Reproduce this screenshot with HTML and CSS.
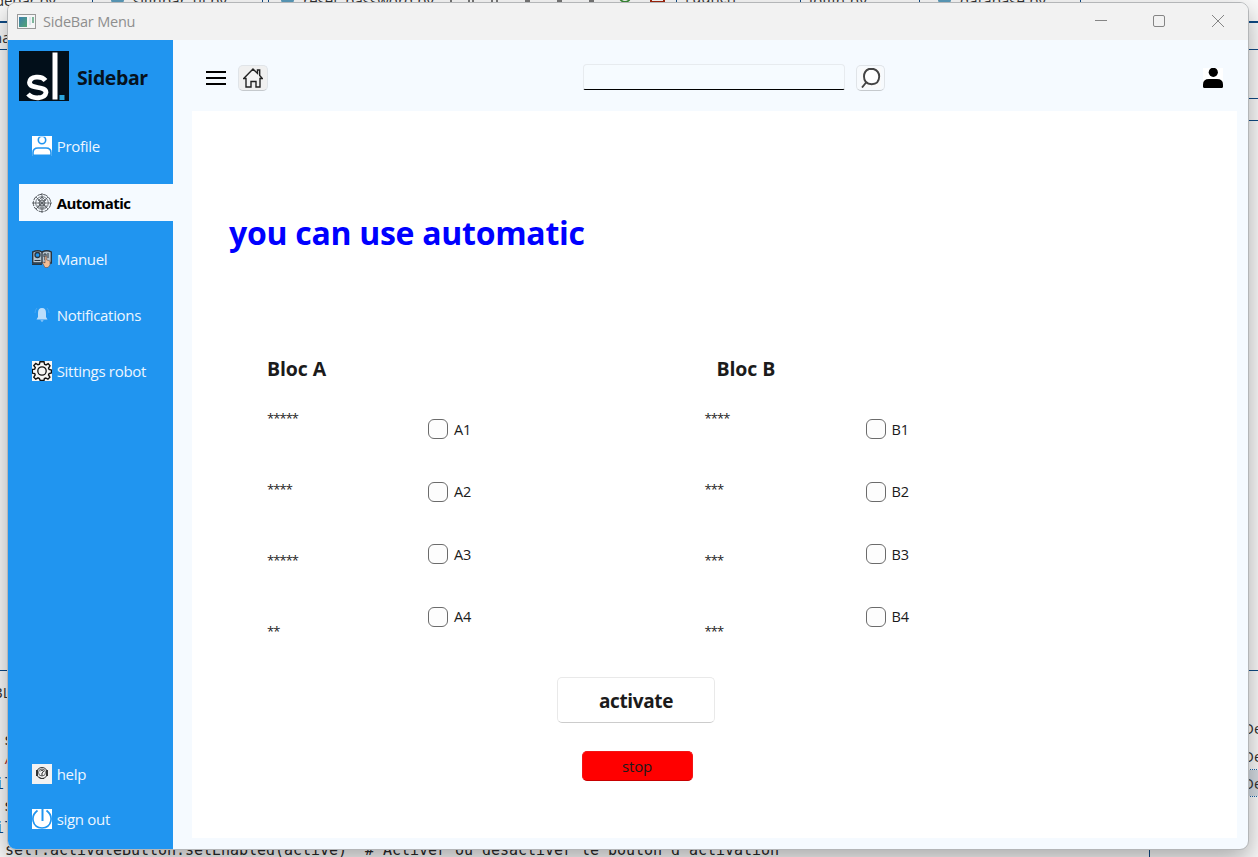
FILE: index.html
```html
<!DOCTYPE html>
<html lang="en">
<head>
<meta charset="utf-8">
<title>SideBar Menu</title>
<link rel="stylesheet" href="styles.css">
</head>
<body>
<div class="desktop">
  <!-- editor behind the window -->
  <svg class="editor" width="1258" height="857" viewBox="0 0 1258 857">
    <g stroke="#0f4a85" stroke-width="1" shape-rendering="crispEdges">
      <path d="M92.5 0V3M262.5 0V3M268.500 0V3M676.5 0V3M800.5 0V3M919.5 0V3M1080.5 0V3"/>
      <path d="M0 49.500H8M0 670.500H8M1248 49.500H1258M1248 98.500H1258M1248 120.500H1258M1248 670.500H1258M1149.500 849V857"/>
      <path d="M0 22H8M1248 22H1258" stroke-width="2"/>
    </g>
    <g fill="#5c9dbd"><rect x="111" y="-6" width="13" height="9" rx="3"/><rect x="281" y="-6" width="13" height="9" rx="3"/><rect x="938" y="-6" width="13" height="9" rx="3"/></g>
    <g class="tabs">
      <text x="-5" y="6" textLength="61">debar.py</text>
      <text x="133" y="6" textLength="94">signbar_ui.py</text>
      <text x="303" y="6" textLength="131">reset_password.py</text>
      <text x="685" y="3" textLength="51">Launch</text>
      <text x="809" y="6" textLength="58">login.py</text>
      <text x="960" y="6" textLength="86">database.py</text>
      <text x="-7" y="43">na</text>
      <text x="-7" y="698">BL</text>
      <text x="1243" y="734">De</text><text x="1243" y="762">De</text>
    </g>
    <g fill="none" stroke="#777" stroke-width="2"><path d="M451 0v2M469 0v2M473 0v2M492 0v2M497 0v2M525 1h5M557 1h5M589 1h5"/><circle cx="625" cy="-3" r="5" stroke="#388a34"/><path d="M651 -5v7h13v-7" stroke="#a1260d"/></g>
    <rect x="1240" y="770" width="18" height="26" fill="#d4dbe2"/>
    <path d="M1240 769.500H1258M1240 796.500H1258" stroke="#1b68ad" stroke-dasharray="1 1"/>
    <text class="side" x="1243" y="789">De</text>
    <g class="code">
      <text x="4" y="745">s</text><text x="4" y="763" fill="#a33">/</text><text x="-5" y="789" fill="#0f4a85">il</text><text x="4" y="811">s</text><text x="-5" y="833" fill="#0f4a85">il</text>
      <text x="5" y="855" textLength="774">self.activateButton.setEnabled(active)&#160; # Activer ou désactiver le bouton d'activation</text>
    </g>
  </svg>

  <div class="window">
    <header class="titlebar">
      <svg width="19" height="16" viewBox="0 0 19 16"><defs><linearGradient id="g" x2="1" y2="1"><stop stop-color="#3b7fae"/><stop offset="1" stop-color="#55a573"/></linearGradient></defs><rect x=".5" y=".5" width="18" height="14" fill="#f5f6f7" stroke="#999"/><rect x="2" y="3" width="8" height="10" fill="url(#g)"/><path d="M12 3h2v8h-2z" fill="#dce7ec"/><path d="M15 3h2v6h-2z" fill="#7fb79c"/></svg>
      <span class="caption">SideBar Menu</span>
      <div class="controls">
        <svg width="12" height="12" viewBox="0 0 12 12"><path d="M0 5.500h12"/></svg>
        <svg width="12" height="12" viewBox="0 0 12 12"><rect x=".5" y=".5" width="11" height="11" rx="1.500"/></svg>
        <svg width="12" height="12" viewBox="0 0 12 12"><path d="M0 0l12 12M12 0L0 12"/></svg>
      </div>
    </header>

    <div class="body">
      <nav class="sidebar">
        <div class="brand">
          <svg width="50" height="50" viewBox="0 0 50 50"><rect width="50" height="50" fill="#020f1a"/><path d="M26.500 29.500C22.500 24.500 11 25 10.500 31.500C10.500 38.500 27 34.500 27 41.500C26 48 14 48.500 9 43" fill="none" stroke="#fff" stroke-width="4.800"/><path d="M33.500 1.500h5v47h-5z" fill="#fff"/><path d="M40.500 44h5v5h-5z" fill="#2aa5de"/></svg>
          <span class="brand-name">Sidebar</span>
        </div>
        <div class="menu">
          <a class="item profile"><svg class="icon" viewBox="0 0 20 20"><rect width="20" height="20" fill="#fff"/><g fill="#fff" stroke="#2095f0" stroke-width="1.600"><circle cx="10" cy="4" r="3.700"/><path d="M1 19.200v-2.500q0-4.700 5-4.700h8q5 0 5 4.700v2.500z"/></g><path d="M7 .2h6" stroke="#fff"/></svg><span>Profile</span></a>
          <a class="item active"><svg class="icon" viewBox="0 0 20 20" fill="none" stroke="#50555a"><circle cx="10" cy="10" r="8.700" stroke-dasharray="5 1"/><g stroke-width=".8"><circle cx="10" cy="10" r="6.300"/><circle cx="10" cy="10" r="3"/><path d="M10 0v20M0 10h20M4 4l12 12M16 4L4 16M6 8l4-4 4 4M6 12v3M14 12v3M8 9v6h4V9"/></g></svg><span>Automatic</span></a>
          <a class="item"><svg class="icon" viewBox="0 0 20 20"><path d="M.7 3Q6 .5 10 3Q15 .5 19.300 3v11H.7z" fill="#b6c4cf" stroke="#29343f" stroke-width="1.400"/><path d="M0 15.300h10M10 3v11" stroke="#29343f" stroke-width="1.300"/><circle cx="5.500" cy="6" r="2.500" fill="#2095f0" stroke="#29343f" stroke-width="1.300"/><path d="M2.500 11.500h6M12 5h2v3h-2zM16 4v5M12 10h2" stroke="#29343f" fill="none"/><path d="M13 7.500q1.500-1 1.700.3V11l3.300 1v4l-2 2.500h-3L10.500 14l1-1 1.500 1z" fill="#f2bd95" stroke="#6a5149" stroke-width=".6"/></svg><span>Manuel</span></a>
          <a class="item"><svg class="icon" viewBox="0 0 20 20"><path d="M10 3q4 0 4 5v4l1.500 2.500h-11L6 12V8q0-5 4-5z" fill="#bbdefb"/><path d="M8.300 15.300h3.400L10 17z" fill="#9bcdf9"/><path d="M5 3Q3 5 3 8M15 3q2 2 2 5" stroke="#43a5f2" fill="none"/></svg><span>Notifications</span></a>
          <a class="item"><svg class="icon" viewBox="0 0 20 20"><rect width="20" height="20" fill="#f7f7f5"/><path d="M8 .8h4l.6 2.500 1.400.6L16.200 2.600 18 4.800 16.500 7l.6 1.500 2.400.5v2.800l-2.400.7-.6 1.500 1.400 2.200-2 2L13.700 17l-1.300.5L12 19.500H8.200l-.8-2-1.400-.6-2.300 1.300-1.900-2 1.400-2.300-.5-1.300-2.400-.5V8.500l2.400-.4.6-1.400-1.500-2.200 2-2 2.200 1.300 1.400-.6z" fill="none" stroke="#111" stroke-width="1.400"/><circle cx="10" cy="10" r="4.200" fill="none" stroke="#111" stroke-width="1.300"/></svg><span>Sittings robot</span></a>
        </div>
        <div class="footer-menu">
          <a class="item"><svg class="icon" viewBox="0 0 20 20"><rect width="20" height="20" fill="#f2f2f2"/><g fill="none" stroke="#333"><circle cx="10" cy="9" r="5.500" stroke-width="1"/><circle cx="10" cy="8.500" r="3.500" stroke-width=".7"/><path d="M5 6v6M15 6v6" stroke-width="2"/><path d="M8.500 7q1.500-2 3 0 0 1.200-1.500 2v3M7 13l2 1.500h3" /></g></svg><span>help</span></a>
          <a class="item"><svg class="icon" viewBox="0 0 20 20"><rect width="20" height="20" fill="#fff"/><g fill="none" stroke="#2095f0"><path d="M10.500 0v12" stroke-width="2"/><path d="M5.500 1.500C-2 7 0 18.500 10 19C20 18.500 22 7 14.500 1.500" stroke-width="1.700"/></g></svg><span>sign out</span></a>
        </div>
      </nav>

      <main class="main">
        <div class="toolbar">
          <svg class="burger" width="20" height="14" viewBox="0 0 20 14"><path d="M0 1h20M0 7h20M0 13h20" stroke="#000" stroke-width="2"/></svg>
          <button class="tool home"><svg width="20" height="20" viewBox="0 0 20 20"><path d="M.7 10.500L10 1l4.500 4.400V2h2.200v5.500l2.600 3H17V19h-4v-5.500H8V19H3v-8.500z" fill="#f4f4f4" stroke="#222" stroke-width="1.400"/></svg></button>
          <input class="search" type="text">
          <button class="tool find"><svg width="20" height="20" viewBox="0 0 20 20"><rect width="20" height="20" fill="#fafafa"/><path d="M8 1h4.500Q18.200 3 18.200 8.500Q18 16.200 10.700 16.200Q3 16 3 8.500Q3 3 8 1zM5.500 14L1 19.500" fill="#fff" stroke="#444" stroke-width="1.900"/></svg></button>
          <svg class="user" width="20" height="20" viewBox="0 0 20 20"><rect width="20" height="20" fill="#fff"/><circle cx="10.300" cy="4.300" r="4.600"/><path d="M0 18.500V16.500Q0 11 6 11h8q6 0 6 5.500v2Q20 20 18.500 20h-17Q0 20 0 18.500z"/></svg>
        </div>

        <section class="page">
          <h1>you can use automatic</h1>
          <div class="blocs">
            <div class="bloc">
              <h2>Bloc A</h2>
              <div class="cols">
                <div class="stars"><span>*****</span><span>****</span><span>*****</span><span>**</span></div>
                <div class="checks"><label><i></i>A1</label><label><i></i>A2</label><label><i></i>A3</label><label><i></i>A4</label></div>
              </div>
            </div>
            <div class="bloc">
              <h2 class="shift">Bloc B</h2>
              <div class="cols">
                <div class="stars"><span>****</span><span>***</span><span>***</span><span>***</span></div>
                <div class="checks"><label><i></i>B1</label><label><i></i>B2</label><label><i></i>B3</label><label><i></i>B4</label></div>
              </div>
            </div>
          </div>
          <div class="actions">
            <button class="activate">activate</button>
            <button class="stop">stop</button>
          </div>
        </section>
      </main>
    </div>
  </div>
</div>
</body>
</html>
```
FILE: styles.css
```css
* { box-sizing: border-box; }
body { margin: 0; font-family: "Open Sans", "Noto Sans", sans-serif; color: #1b1b1b; }
button { font-family: inherit; color: inherit; padding: 0; }
svg { display: block; flex: none; }

.desktop { position: relative; width: 1258px; height: 857px; overflow: hidden; background: #fafafa; }
.editor { position: absolute; left: 0; top: 0; }
.tabs, .side { font: 15px "Open Sans", sans-serif; fill: #333; }
.code { font: 15px "DejaVu Sans Mono", monospace; fill: #292929; }

.window {
  position: absolute; left: 7px; top: 2px; width: 1242px; height: 848px;
  display: flex; flex-direction: column;
  border: 1px solid #b4b6b8; border-radius: 9px; overflow: hidden;
  background: #f5faff; box-shadow: 0 10px 26px rgba(0,0,0,.32);
}
.titlebar { height: 37px; display: flex; align-items: center; padding: 0 24px 0 9px; background: #f2f2f2; }
.caption { margin-left: 7px; font-size: 14.5px; letter-spacing: -.2px; color: #8e8e8e; }
.controls { margin-left: auto; display: flex; gap: 46.600px; margin-top: -1px; fill: none; stroke: #858585; }

.body { flex: 1; display: flex; }
.sidebar { width: 165px; display: flex; flex-direction: column; background: #2095f0; color: #edf6ff; }
.brand { display: flex; align-items: center; gap: 8px; padding: 11px 0 0 11px; }
.brand-name { padding-top: 3px; font-size: 19.5px; font-weight: 700; letter-spacing: -.4px; color: #06121d; }
.menu { display: flex; flex-direction: column; gap: 19px; margin-top: 27px; padding-left: 11px; }
.item { display: flex; align-items: center; height: 37px; padding-left: 13px; gap: 4.700px; font-size: 15px; white-space: nowrap; letter-spacing: -.3px; }
.profile { padding-bottom: 2px; }
.icon { width: 20px; height: 20px; }
.active { background: #f5faff; color: #000; font-weight: 700; letter-spacing: -.55px; }
.footer-menu { display: flex; flex-direction: column; gap: 8px; margin-top: auto; padding: 0 0 12px 11px; }

.main { flex: 1; display: flex; flex-direction: column; padding: 0 11px 11px 19px; }
.toolbar { height: 71px; display: flex; align-items: center; padding: 4px 14px 0 14px; }
.tool { width: 30px; height: 26px; display: grid; place-items: center; border: 1px solid #e0e4e8; border-bottom-color: #c5c9cd; border-radius: 5px; background: #f7fafd; }
.home { margin-left: 12px; background: #f0f0f0; }
.search { width: 262px; height: 26px; margin: 0 0 2px 315px; border: 1px solid #e7ebef; border-bottom: 1px solid #000; border-radius: 4px 4px 2px 2px; background: #f6fbff; outline: none; }
.find { margin-left: 11px; width: 29px; }
.user { margin-left: auto; }

.page { flex: 1; background: #fff; padding: 99px 0 0 37px; }
h1 { margin: 0; height: 46px; line-height: 46px; font-size: 32px; font-weight: 700; letter-spacing: -.28px; color: #00f; }
.blocs { display: flex; margin: 99px 0 0 38px; }
.bloc { width: 437.5px; }
h2 { margin: 0; height: 28px; line-height: 28px; font-size: 19.5px; font-weight: 700; letter-spacing: -.1px; }
.shift { padding-left: 12px; }
.cols { display: flex; height: 294px; font-size: 14.5px; }
.stars { width: 161px; display: flex; flex-direction: column; padding-top: 23px; font-size: 13px; letter-spacing: -.95px; }
.stars span { flex: none; height: 71px; line-height: 24px; }
.checks { display: flex; flex-direction: column; gap: 42.5px; padding-top: 36px; letter-spacing: -.1px; }
.checks label { height: 20px; display: flex; align-items: center; gap: 6px; }
.checks i { width: 20px; height: 20px; border: 1px solid #6b6b6b; border-radius: 6px; background: #fdfdfd; }
.actions { width: 158px; margin-left: 328px; display: flex; flex-direction: column; align-items: center; gap: 28px; }
.activate { width: 158px; height: 46px; border: 1px solid #e9e9e9; border-bottom-color: #ccc; border-radius: 5px; background: #fff; font-size: 19px; font-weight: 700; letter-spacing: -.35px; padding-top: 2px; }
.stop { width: 111px; height: 30px; margin-left: 2px; border: 1px solid #f21414; border-bottom-color: #c70000; border-radius: 5px; background: #f00; font-size: 15px; letter-spacing: -.2px; }
```
